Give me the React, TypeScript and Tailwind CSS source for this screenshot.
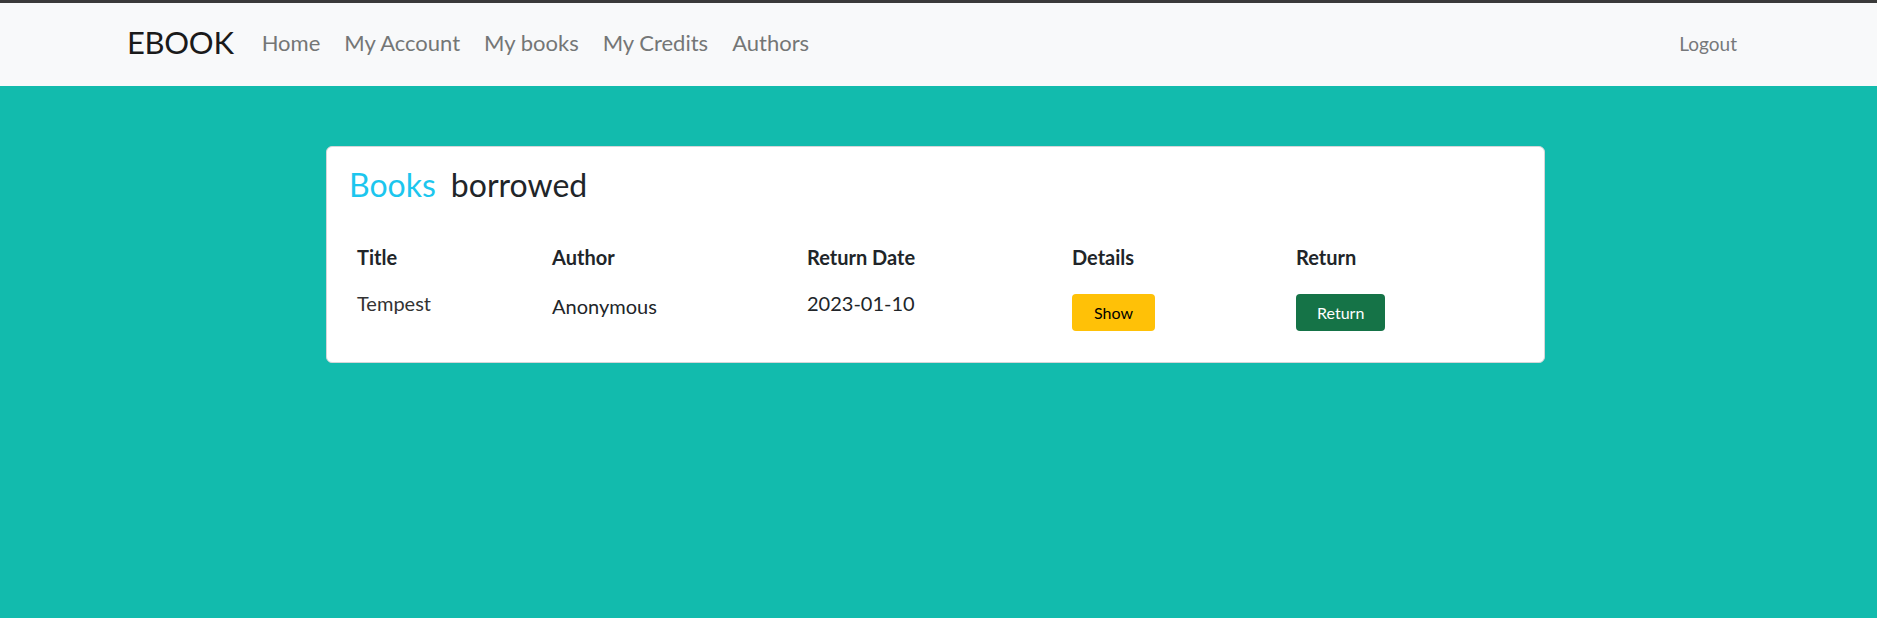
const navLinks = ['Home', 'My Account', 'My books', 'My Credits', 'Authors']

const borrowed = [
  { title: 'Tempest', author: 'Anonymous', returnDate: '2023-01-10' },
]

const App = () => {
  return (
    <div className="min-h-screen flex flex-col bg-[#12bbad] font-['Lato',sans-serif] text-[#212529]">
      <nav className="border-t-[3px] border-[#3a3a3a] bg-[#f8f9fa]">
        <div className="h-[83px] flex items-center pl-[127px] pr-[127px]">
          <span className="text-[31px] leading-none text-[#1a1a1a] mr-[16px] mb-[4px] tracking-[-0.3px]">
            EBOOK
          </span>
          <ul className="flex items-center mb-[4px]">
            {navLinks.map((link) => (
              <li key={link}>
                <a className="block px-[12px] text-[22px] text-[#747676]">
                  {link}
                </a>
              </li>
            ))}
          </ul>
          <a className="ml-auto mr-[13px] text-[19px] text-[#76787a]">Logout</a>
        </div>
      </nav>

      <main className="flex-1 pt-[60px]">
        <div className="w-[1219px] ml-[326px] bg-white border border-[#d4d6d8] rounded-md px-[22px] pt-[19px] pb-[31px]">
          <h2 className="text-[32px] leading-[1.2] flex gap-[15px]">
            <span className="text-[#1cc6ee]">Books</span>
            <span>borrowed</span>
          </h2>
          <table className="w-full mt-[30px] text-left text-[20px] leading-[1.5]">
            <thead>
              <tr>
                <th className="w-[195px] px-2 py-2 font-bold">Title</th>
                <th className="w-[255px] px-2 py-2 font-bold">Author</th>
                <th className="w-[265px] px-2 py-2 font-bold">Return Date</th>
                <th className="w-[224px] px-2 py-2 font-bold">Details</th>
                <th className="px-2 py-2 font-bold">Return</th>
              </tr>
            </thead>
            <tbody>
              {borrowed.map((book, bookIndex) => (
                <tr key={`book-${bookIndex}`}>
                  <td className="px-2 pt-2 align-top text-[#333]">{book.title}</td>
                  <td className="px-2 pt-[11px] align-top">{book.author}</td>
                  <td className="px-2 pt-2 align-top">{book.returnDate}</td>
                  <td className="px-2 pt-[14px] align-top">
                    <button
                      type="button"
                      className="h-[37px] px-[22px] rounded-[4px] bg-[#ffc107] text-[16px] text-black"
                    >
                      Show
                    </button>
                  </td>
                  <td className="px-2 pt-[14px] align-top">
                    <button
                      type="button"
                      className="h-[37px] px-[21px] rounded-[4px] bg-[#157347] text-[16px] text-white"
                    >
                      Return
                    </button>
                  </td>
                </tr>
              ))}
            </tbody>
          </table>
        </div>
      </main>
    </div>
  )
}

export default App
